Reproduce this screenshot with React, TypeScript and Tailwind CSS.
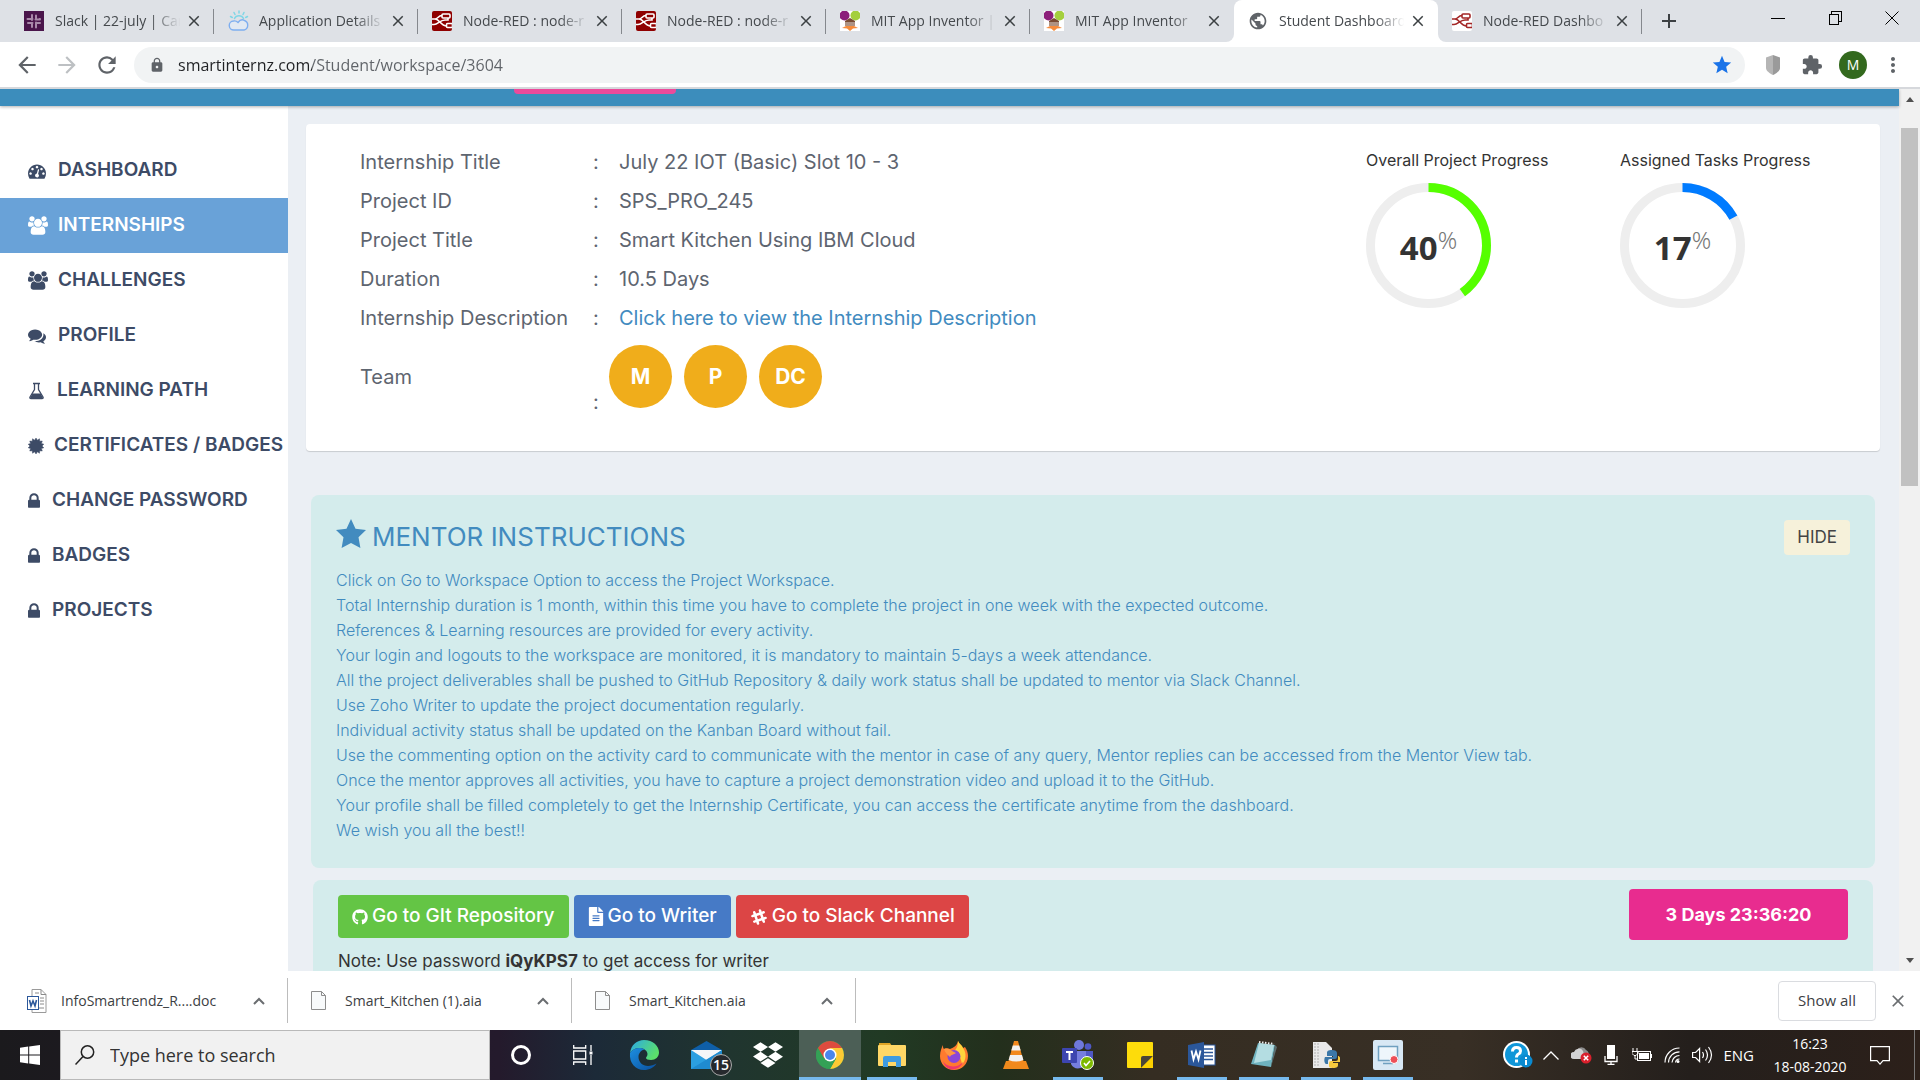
import React from "react";
import { FaGithub, FaFileAlt, FaSlackHash, FaLock, FaDropbox } from "react-icons/fa";
import { MdArrowBack, MdArrowForward, MdRefresh, MdExtension, MdStar, MdMoreVert, MdLock, MdClose, MdPublic, MdAdd } from "react-icons/md";

type IconProps = { className?: string };

/* ---------- favicons ---------- */

const SlackFavicon = () => (
  <svg viewBox="0 0 20 20" className="size-5">
    <rect width="20" height="20" fill="#4a154b" />
    <g stroke="#a98aaa" strokeWidth="2" strokeLinecap="round" fill="none">
      <path d="M8 4v5M3.500 8H5M12 4.500v4M15.500 8h.5M11.500 8.500H16M4 12h4.500M8 12v4M12 11.500v5M12 12h4M5 8h3.500" />
    </g>
  </svg>
);

const CloudFavicon = () => (
  <svg viewBox="0 0 22 22" className="h-[22px] w-[22px]" fill="none">
    <g stroke="#7fd6e6" strokeWidth="1.500" strokeLinecap="round">
      <path d="M11 1v2M6 2.500l1 2M16 2.500l-1 2M2.500 6.500l1.800 1M19.500 6.500l-1.800 1M6.500 8.500a5 5 0 0 1 9 0" />
    </g>
    <path d="M6 20a4.500 4.500 0 0 1-.5-9q2.500-.5 4.500 1.500 3-4 6.500-2a5 5 0 0 1-.5 9.500z" stroke="#7eaef0" strokeWidth="1.400" fill="#e2e9f2" />
  </svg>
);

const NodeRedMark = ({ color }: { color: string }) => (
  <g fill="none" stroke={color} strokeWidth="1.600">
    <path d="M0 8h3c3 0 3-3.500 7-3.500M3 8c5 0 5 7 12 7" />
    <rect x="10" y="3" width="8" height="4" rx="1" />
    <rect x="14.500" y="12.500" width="6" height="4" rx="1" />
    <path d="M0 13.500h2c4 0 6-4.500 11-4.500h3V7" />
  </g>
);

const NodeRedFavicon = () => (
  <svg viewBox="0 0 20 20" className="size-5">
    <rect width="20" height="20" rx="2" fill="#8f0000" />
    <NodeRedMark color="#fff" />
  </svg>
);

const NodeRedLightFavicon = () => (
  <svg viewBox="0 0 20 20" className="size-5">
    <rect width="20" height="20" rx="2" fill="#fff" />
    <NodeRedMark color="#a32626" />
  </svg>
);

const AppInventorFavicon = () => (
  <svg viewBox="0 0 20 20" className="size-5">
    <rect width="20" height="20" fill="#fff" />
    <circle cx="4.500" cy="4.500" r="5" fill="#8c1f7a" />
    <circle cx="15.500" cy="4.500" r="5" fill="#a4cf3e" />
    <path d="M5 10l5-3 5 3v5H5z" fill="#7a4b33" />
    <path d="M5 12h10M5 14h10" stroke="#fff" strokeWidth=".8" />
    <path d="M2 17l4-2h8l4 2-5 .5L10 20l-3-2.500z" fill="#f58b3c" />
  </svg>
);

/* ---------- sidebar icons ---------- */

const DashboardIcon = ({ className }: IconProps) => (
  <svg viewBox="0 0 1792 1792" fill="currentColor" className={className}>
    <path d="M384 1152q0-53-37.500-90.500t-90.500-37.500-90.500 37.500-37.500 90.500 37.500 90.500 90.500 37.500 90.500-37.500 37.500-90.500zm192-448q0-53-37.500-90.500t-90.500-37.500-90.500 37.500-37.500 90.500 37.500 90.500 90.500 37.500 90.500-37.500 37.500-90.500zm428 481l101-382q6-26-7.500-48.500t-38.500-29.500-48 6.500-30 39.500l-101 382q-60 5-107 43.500t-63 98.500q-20 77 20 146t117 89 146-20 89-117q16-60-6-117t-72-91zm660-33q0-53-37.500-90.500t-90.500-37.500-90.500 37.500-37.500 90.500 37.500 90.500 90.500 37.500 90.500-37.500 37.500-90.500zm-640-640q0-53-37.500-90.500t-90.500-37.500-90.500 37.500-37.500 90.500 37.500 90.500 90.500 37.500 90.500-37.500 37.500-90.500zm448 192q0-53-37.500-90.500t-90.500-37.500-90.500 37.500-37.500 90.500 37.500 90.500 90.500 37.500 90.500-37.500 37.500-90.500zm320 448q0 261-141 483-19 29-54 29h-1402q-35 0-54-29-141-221-141-483 0-182 71-348t191-286 286-191 348-71 348 71 286 191 191 286 71 348z" />
  </svg>
);

const GroupIcon = ({ className }: IconProps) => (
  <svg viewBox="0 0 1920 1792" fill="currentColor" className={className}>
    <path d="M593 896q-162 5-265 128h-134q-82 0-138-40.500t-56-118.500q0-353 124-353 6 0 43.500 21t97.500 42.500 119 21.500q67 0 133-23-5 37-5 66 0 139 81 256zm1071 637q0 120-73 189.500t-194 69.500h-874q-121 0-194-69.500t-73-189.500q0-53 3.500-103.500t14-109 26.500-108.500 43-97.500 62-81 85.500-53.500 111.500-20q10 0 43 21.500t73 48 107 48 135 21.500 135-21.500 107-48 73-48 43-21.500q61 0 111.500 20t85.500 53.500 62 81 43 97.500 26.500 108.500 14 109 3.500 103.500zm-1024-1277q0 106-75 181t-181 75-181-75-75-181 75-181 181-75 181 75 75 181zm704 384q0 159-112.500 271.500t-271.500 112.500-271.500-112.500-112.500-271.500 112.500-271.500 271.500-112.500 271.500 112.500 112.500 271.500zm576 225q0 78-56 118.500t-138 40.500h-134q-103-123-265-128 81-117 81-256 0-29-5-66 66 23 133 23 59 0 119-21.500t97.500-42.500 43.500-21q124 0 124 353zm-128-609q0 106-75 181t-181 75-181-75-75-181 75-181 181-75 181 75 75 181z" />
  </svg>
);

const CommentsIcon = ({ className }: IconProps) => (
  <svg viewBox="0 0 1792 1792" fill="currentColor" className={className}>
    <path d="M1408 768q0 139-94 257t-256.500 186.500-353.500 68.500q-86 0-176-16-124 88-278 128-36 9-86 16h-3q-11 0-20.500-8t-11.500-21q-1-3-1-6.500t.5-6.500 2-6l2.500-5 3.500-5.500 4-5 4.500-5 4-4.500q5-6 23-25t26-29.500 22.500-29 25-38.500 20.500-44q-124-72-195-177t-71-224q0-139 94-257t256.500-186.500 353.500-68.500 353.500 68.500 256.500 186.500 94 257zm384 256q0 120-71 224.500t-195 176.500q10 24 20.500 44t25 38.500 22.500 29 26 29.500 23 25q1 1 4 4.500t4.500 5 4 5 3.500 5.500l2.500 5 2 6 .5 6.500-1 6.500q-3 14-13 22t-22 7q-50-7-86-16-154-40-278-128-90 16-176 16-271 0-472-132 58 4 88 4 161 0 309-45t264-129q125-92 192-212t67-254q0-77-23-152 129 71 204 178t75 230z" />
  </svg>
);

const FlaskIcon = ({ className }: IconProps) => (
  <svg viewBox="0 0 17 18" fill="none" className={className}>
    <path d="M5 1.500h7M6.500 1.500v6L2 15c-.5 1 0 1.700 1 1.700h11c1 0 1.500-.7 1-1.700L10.500 7.500v-6" stroke="currentColor" strokeWidth="1.300" />
    <path d="M4.500 11.500h8l2.300 4c.3.800 0 1.200-.7 1.200H2.900c-.8 0-1-.5-.7-1.200z" fill="currentColor" />
  </svg>
);

const LockIcon = ({ className }: IconProps) => (
  <svg viewBox="320 128 1152 1408" fill="currentColor" className={className}>
    <path d="M640 768h512v-192q0-106-75-181t-181-75-181 75-75 181v192zm832 96v576q0 40-28 68t-68 28h-960q-40 0-68-28t-28-68v-576q0-40 28-68t68-28h32v-192q0-184 132-316t316-132 316 132 132 316v192h32q40 0 68 28t28 68z" />
  </svg>
);

const BADGE_POINTS = Array.from({ length: 28 }, (_, i) => {
  const r = i % 2 === 0 ? 8 : 6;
  const a = (i * Math.PI) / 14;
  return `${(8 + r * Math.sin(a)).toFixed(2)},${(8 - r * Math.cos(a)).toFixed(2)}`;
}).join(" ");

const CertificateIcon = ({ className }: IconProps) => (
  <svg viewBox="0 0 16 16" fill="currentColor" className={className}>
    <polygon points={BADGE_POINTS} strokeLinejoin="round" stroke="currentColor" strokeWidth=".5" />
  </svg>
);

/* ---------- browser chrome ---------- */

const TABS = [
  { title: "Slack | 22-july | Car", icon: <SlackFavicon /> },
  { title: "Application Details", icon: <CloudFavicon /> },
  { title: "Node-RED : node-r", icon: <NodeRedFavicon /> },
  { title: "Node-RED : node-r", icon: <NodeRedFavicon /> },
  { title: "MIT App Inventor |", icon: <AppInventorFavicon /> },
  { title: "MIT App Inventor", icon: <AppInventorFavicon /> },
  { title: "Student Dashboard", icon: <MdPublic className="size-5 text-[#5f6368]" />, active: true },
  { title: "Node-RED Dashbo", icon: <NodeRedLightFavicon /> },
];

function TabStrip() {
  return (
    <div className="flex h-[42px] items-stretch bg-[#dee1e6] pl-2.5">
      {TABS.map((tab, i) => {
        const nextActive = TABS[i + 1]?.active;
        const shape = tab.active
          ? "rounded-t-lg bg-white"
          : nextActive
            ? "rounded-br-lg bg-[#dee1e6]"
            : TABS[i - 1]?.active
              ? "rounded-bl-lg bg-[#dee1e6]"
              : "bg-[#dee1e6]";
        const under = nextActive || TABS[i - 1]?.active ? "bg-linear-to-b from-[#dee1e6] from-50% to-white to-50%" : tab.active ? "bg-[#dee1e6]" : "";
        return (
          <div key={i} className={`w-51 min-w-0 ${under}`}>
            <div className={`flex h-full items-center pl-3.5 ${shape}`}>
              <span className="flex w-[22px] shrink-0">{tab.icon}</span>
              <span className="ml-[9px] w-32 overflow-hidden whitespace-nowrap text-sm text-[#45494d] [mask-image:linear-gradient(to_right,black_75%,transparent_98%)]">
                {tab.title}
              </span>
              <button aria-label="Close tab" className="ml-0.5 text-[#3c4043]">
                <MdClose className="size-[18px]" />
              </button>
              {!tab.active && !nextActive && <span className="ml-auto h-[25px] w-px bg-[#85888d]" />}
            </div>
          </div>
        );
      })}
      <button aria-label="New tab" className="ml-[15px] text-[#3c4043]">
        <MdAdd className="size-6" />
      </button>
      <div className="ml-auto flex pb-1.5 text-black">
        <button aria-label="Minimize" className="grid w-[57px] place-items-center">
          <span className="h-px w-3.5 bg-black" />
        </button>
        <button aria-label="Restore" className="grid w-[57px] place-items-center">
          <svg viewBox="0 0 14 14" className="size-3.5" fill="none" stroke="currentColor" shapeRendering="crispEdges">
            <path d="M1 3.500h9.500v10H1zM3.500 3V.5h10v10H11" />
          </svg>
        </button>
        <button aria-label="Close window" className="grid w-[57px] place-items-center">
          <svg viewBox="0 0 14 14" className="size-3.5" fill="none" stroke="currentColor">
            <path d="M.5.5l13 13M13.500.5l-13 13" />
          </svg>
        </button>
      </div>
    </div>
  );
}

function Toolbar() {
  return (
    <div className="flex h-[47px] items-center border-b-2 border-[#d6d8dc] bg-white pr-[15px] pl-3.5 text-[#5f6368]">
      <button aria-label="Back" className="mr-3.5"><MdArrowBack className="size-[26px]" /></button>
      <button aria-label="Forward" className="mr-3.5 text-[#bdc0c3]"><MdArrowForward className="size-[26px]" /></button>
      <button aria-label="Reload" className="mr-3.5"><MdRefresh className="size-[26px]" /></button>
      <div className="flex h-9 flex-1 items-center rounded-full bg-[#f1f3f4] pr-3 pl-[15px]">
        <MdLock className="mr-[13px] size-4" />
        <input
          aria-label="Address"
          defaultValue="smartinternz.com/Student/workspace/3604"
          className="min-w-0 flex-1 bg-[linear-gradient(to_right,#202124_134px,#5f6368_134px)] bg-clip-text text-base text-transparent outline-none"
        />
        <button aria-label="Bookmark" className="text-[#1a73e8]"><MdStar className="size-[22px]" /></button>
      </div>
      <button aria-label="Shield extension" className="ml-5">
        <svg viewBox="0 0 16 20" className="h-5 w-4">
          <path d="M8 0l7 2.500V13c0 3-4 5.500-7 7z" fill="#9a9a9a" />
          <path d="M8 0L1 2.500V13c0 3 4 5.500 7 7z" fill="#b5b5b5" />
        </svg>
      </button>
      <button aria-label="Extensions" className="ml-5"><MdExtension className="size-[22px]" /></button>
      <button aria-label="Profile" className="ml-4 grid size-7 place-items-center rounded-full bg-[#33691e] text-sm text-white">M</button>
      <button aria-label="Menu" className="ml-3.5"><MdMoreVert className="size-6" /></button>
    </div>
  );
}

/* ---------- page ---------- */

const NAV = [
  { label: "DASHBOARD", icon: <DashboardIcon className="size-[18px]" />, gap: "gap-3" },
  { label: "INTERNSHIPS", icon: <GroupIcon className="h-[19px] w-5" />, gap: "gap-2.5", active: true },
  { label: "CHALLENGES", icon: <GroupIcon className="h-[19px] w-5" />, gap: "gap-2.5" },
  { label: "PROFILE", icon: <CommentsIcon className="size-[18px]" />, gap: "gap-3" },
  { label: "LEARNING PATH", icon: <FlaskIcon className="h-[18px] w-[17px]" />, gap: "gap-3" },
  { label: "CERTIFICATES / BADGES", icon: <CertificateIcon className="size-4" />, gap: "gap-2.5" },
  { label: "CHANGE PASSWORD", icon: <LockIcon className="h-[15px] w-3" />, gap: "gap-3" },
  { label: "BADGES", icon: <LockIcon className="h-[15px] w-3" />, gap: "gap-3" },
  { label: "PROJECTS", icon: <LockIcon className="h-[15px] w-3" />, gap: "gap-3" },
];

function Sidebar() {
  return (
    <nav className="w-72 shrink-0 bg-white pt-[37px]">
      {NAV.map((n) => (
        <a
          key={n.label}
          href="#"
          className={`flex h-[55px] items-center pl-7 text-[19px] font-semibold whitespace-nowrap ${n.gap} ${n.active ? "bg-[#69a2d8] text-white" : "text-[#3d4b66]"}`}
        >
          {n.icon}
          {n.label}
        </a>
      ))}
    </nav>
  );
}

const DETAILS: [string, React.ReactNode][] = [
  ["Internship Title", "July 22 IOT (Basic) Slot 10 - 3"],
  ["Project ID", "SPS_PRO_245"],
  ["Project Title", "Smart Kitchen Using IBM Cloud"],
  ["Duration", "10.5 Days"],
  ["Internship Description", <a key="d" href="#" className="text-[#428bbf]">Click here to view the Internship Description</a>],
];

function Ring({ label, value, color }: { label: string; value: number; color: string }) {
  const r = 58;
  const c = 2 * Math.PI * r;
  return (
    <div className="w-[254px]">
      <div className="text-base leading-6 whitespace-nowrap text-[#333]">{label}</div>
      <div className="relative mt-[11px] size-[125px]">
        <svg viewBox="0 0 125 125" className="size-full -rotate-90" fill="none" strokeWidth="9">
          <circle cx="62.500" cy="62.500" r={r} stroke="#eee" />
          <circle cx="62.500" cy="62.500" r={r} stroke={color} strokeDasharray={`${(c * value) / 100} ${c}`} />
        </svg>
        <div className="absolute inset-0 flex items-center justify-center pt-1 font-['Noto_Sans',sans-serif] text-[33px] font-bold text-[#333]">
          {value}
          <span className="mb-4 text-2xl font-light text-[#777]">%</span>
        </div>
      </div>
    </div>
  );
}

function DetailsCard() {
  return (
    <section className="flex justify-between rounded bg-white pt-[18px] pb-[35px] pl-[54px] shadow-[0_1px_1px_rgba(0,0,0,0.15)]">
      <table className="self-start text-left text-xl text-[#5e6570]">
        <tbody>
          {DETAILS.map(([k, v]) => (
            <tr key={k} className="h-[39px]">
              <th className="w-[233px] p-0 font-normal">{k}</th>
              <td className="w-[26px] p-0">:</td>
              <td className="p-0">{v}</td>
            </tr>
          ))}
          <tr className="h-[79px]">
            <th className="p-0 font-normal">Team</th>
            <td className="p-0 align-bottom">:</td>
            <td className="p-0">
              <div className="-ml-2.5 flex gap-3">
                {["M", "P", "DC"].map((t) => (
                  <span key={t} className="grid size-[63px] place-items-center rounded-full bg-[#f0ad1b] text-[21px] font-bold text-white">{t}</span>
                ))}
              </div>
            </td>
          </tr>
        </tbody>
      </table>
      <div className="flex pt-1.5 pr-1.5">
        <Ring label="Overall Project Progress" value={40} color="#55ff00" />
        <Ring label="Assigned Tasks Progress" value={17} color="#007bff" />
      </div>
    </section>
  );
}

const INSTRUCTIONS = [
  "Click on Go to Workspace Option to access the Project Workspace.",
  "Total Internship duration is 1 month, within this time you have to complete the project in one week with the expected outcome.",
  "References & Learning resources are provided for every activity.",
  "Your login and logouts to the workspace are monitored, it is mandatory to maintain 5-days a week attendance.",
  "All the project deliverables shall be pushed to GitHub Repository & daily work status shall be updated to mentor via Slack Channel.",
  "Use Zoho Writer to update the project documentation regularly.",
  "Individual activity status shall be updated on the Kanban Board without fail.",
  "Use the commenting option on the activity card to communicate with the mentor in case of any query, Mentor replies can be accessed from the Mentor View tab.",
  "Once the mentor approves all activities, you have to capture a project demonstration video and upload it to the GitHub.",
  "Your profile shall be filled completely to get the Internship Certificate, you can access the certificate anytime from the dashboard.",
  "We wish you all the best!!",
];

function Instructions() {
  return (
    <section className="mx-[5px] mt-11 rounded-lg bg-[#d4ecec] px-[25px] pt-[25px] pb-[25px] text-[#428bbf]">
      <div className="flex items-start justify-between">
        <h2 className="flex h-8 items-center gap-1.5 text-[26px]">
          <svg viewBox="0 0 30 29" className="mb-1.5 h-[29px] w-[30px]" fill="currentColor">
            <path d="M15 0l4.500 9.800L30 11l-7.500 7.300L24.400 29 15 24 5.600 29l1.900-10.700L0 11l10.500-1.200z" />
          </svg>
          MENTOR INSTRUCTIONS
        </h2>
        <button className="h-[35px] rounded bg-[#f6f1da] px-[13px] text-[17px] text-[#444]">HIDE</button>
      </div>
      <div className="mt-[13px] text-base leading-[25px] font-light whitespace-nowrap">
        {INSTRUCTIONS.map((t) => <p key={t}>{t}</p>)}
      </div>
    </section>
  );
}

function Actions() {
  return (
    <section className="mx-[7px] mt-3 flex h-[200px] items-start justify-between rounded-t-lg bg-[#d4ecec] px-[25px] text-white">
      <div className="pt-[15px]">
        <div className="flex gap-[5px] text-[19px] font-medium">
          <a href="#" className="flex h-[43px] items-center gap-1 rounded bg-[#64c545] px-3.5"><FaGithub className="size-4" />Go to GIt Repository</a>
          <a href="#" className="flex h-[43px] items-center gap-1 rounded bg-[#467ac6] px-3.5"><FaFileAlt className="h-[19px] w-4" />Go to Writer</a>
          <a href="#" className="flex h-[43px] items-center gap-1 rounded bg-[#dc4545] px-3.5"><FaSlackHash className="size-[18px]" />Go to Slack Channel</a>
        </div>
        <p className="mt-[11px] text-[17px] text-[#333]">
          Note: Use password <b>iQyKPS7</b> to get access for writer
        </p>
      </div>
      <div className="mt-[9px] grid h-[51px] w-[219px] place-items-center rounded bg-[#e82c8f] text-lg font-bold">3 Days 23:36:20</div>
    </section>
  );
}

function Scrollbar() {
  return (
    <div className="flex w-[21px] shrink-0 flex-col items-center bg-[#f1f1f1] py-2">
      <svg viewBox="0 0 8 5" className="h-[5px] w-2.5" fill="#505050"><path d="M4 0l4 5H0z" /></svg>
      <div className="mt-[26px] h-[358px] w-[17px] bg-[#c1c1c1]" />
      <svg viewBox="0 0 8 5" className="mt-auto h-[5px] w-2.5" fill="#505050"><path d="M0 0h8L4 5z" /></svg>
    </div>
  );
}

function Page() {
  return (
    <div className="flex min-h-0 flex-1 overflow-hidden bg-[#ebeff4] font-[Inter,sans-serif]">
      <div className="flex min-w-0 flex-1 flex-col">
        <header className="z-10 h-[17px] shrink-0 bg-[#3c8dbc] pl-[514px] shadow-[0_1px_3px_rgba(0,0,0,0.3)]">
          <div className="h-[5px] w-[162px] rounded-b bg-[#ec4a9b]" />
        </header>
        <div className="flex min-h-0 flex-1">
          <Sidebar />
          <main className="min-w-0 flex-1 overflow-hidden pt-[18px] pr-[19px] pl-[18px]">
            <DetailsCard />
            <Instructions />
            <Actions />
          </main>
        </div>
      </div>
      <Scrollbar />
    </div>
  );
}

/* ---------- downloads ---------- */

const WordDoc = () => (
  <svg viewBox="0 0 20 24" className="h-6 w-5">
    <path d="M5 .5h9l5 5v18H5z" fill="#fff" stroke="#9a9a9a" />
    <path d="M14 .5v5h5M13 9h4M13 12h4M13 15h4M8 19h9M8 4h4" stroke="#8a8a8a" fill="none" />
    <rect x=".5" y="7.500" width="11" height="13" fill="#fff" stroke="#2b579a" />
    <path d="M2.500 11l1.500 6 2-5 2 5 1.500-6" stroke="#2b579a" strokeWidth="1.600" fill="none" />
  </svg>
);

const BlankDoc = () => (
  <svg viewBox="0 0 15 19" className="h-[19px] w-[15px]">
    <path d="M.5.5h10l4 4v14H.5z" fill="#f8fafb" stroke="#8d8d8d" />
    <path d="M10.500.5v4h4" fill="none" stroke="#8d8d8d" />
  </svg>
);

function Downloads() {
  const items = [
    { name: "InfoSmartrendz_R....doc", icon: <WordDoc /> },
    { name: "Smart_Kitchen (1).aia", icon: <BlankDoc /> },
    { name: "Smart_Kitchen.aia", icon: <BlankDoc /> },
  ];
  return (
    <div className="flex h-[59px] shrink-0 items-center bg-white pl-1 text-sm text-[#3c4043]">
      {items.map((d) => (
        <div key={d.name} className="flex h-[45px] w-71 items-center border-r border-[#bcbcbc] pr-[22px] pl-[21px]">
          <span className="flex w-9 shrink-0 items-center pl-0.5">{d.icon}</span>
          <a href="#" className="min-w-0 flex-1 whitespace-nowrap">{d.name}</a>
          <button aria-label={`Options for ${d.name}`}>
            <svg viewBox="0 0 12 8" className="h-2 w-3" fill="none" stroke="#6a6d70" strokeWidth="2"><path d="M1 7l5-5 5 5" /></svg>
          </button>
        </div>
      ))}
      <button className="mr-3 ml-auto h-10 w-[98px] rounded border border-[#dadce0] text-[15px]">Show all</button>
      <button aria-label="Close downloads" className="mr-3 text-[#6a6d70]"><MdClose className="size-5" /></button>
    </div>
  );
}

/* ---------- taskbar ---------- */

const EdgeIcon = () => (
  <svg viewBox="0 0 30 30" className="size-[30px]">
    <defs>
      <linearGradient id="edgeTop" x1="0" y1="0" x2="1" y2="0.500"><stop offset="0" stopColor="#2aa8e8" /><stop offset="1" stopColor="#5be06a" /></linearGradient>
      <linearGradient id="edgeLow" x1="0" y1="0" x2="1" y2="1"><stop offset="0" stopColor="#1d8fe0" /><stop offset="1" stopColor="#0a4f9e" /></linearGradient>
    </defs>
    <path d="M1 13C2 5 8 0 15 0c9 0 15 6 15 12.500C30 17 26.500 20 22 20c-3 0-5-1-5-2 0-1 1.500-1.500 1.500-4 0-3-3.500-6-8-6C6 8 3 10 1 13z" fill="url(#edgeTop)" />
    <path d="M1 13c2-3 5-5 9.500-5 2 0 4 .6 5.500 1.600C12 10 9.500 13.500 9.500 17c0 5 4 9 9.500 9 3 0 6-1 8.500-2.500C25 27.500 20.500 30 15 30 6.500 30 0 23 1 13z" fill="url(#edgeLow)" />
  </svg>
);

const MailIcon = () => (
  <svg viewBox="0 0 31 28" className="h-7 w-[31px]">
    <path d="M15.500 0L31 9v19H0V9z" fill="#0f5fa8" />
    <path d="M0 9h31v14H0z" fill="#f4f6f8" />
    <path d="M0 9l15.500 10L31 9v19H0z" fill="#2b9fe0" />
    <path d="M0 28l31-19v19z" fill="#1f8bd0" />
  </svg>
);

const ChromeIcon = () => (
  <svg viewBox="0 0 28 28" className="size-7">
    <circle cx="14" cy="14" r="14" fill="#34a156" />
    <path d="M14 14L1.900 7A14 14 0 0 1 26.100 7z" fill="#dd4b3e" />
    <path d="M14 7h12.100A14 14 0 0 1 14 28l6-10.500z" fill="#fcc934" />
    <path d="M1.900 7L8 17.500 14 14 14 7z" fill="#dd4b3e" />
    <path d="M1.900 7A14 14 0 0 0 14 28l6-10.500-6 3-6-3z" fill="#34a156" />
    <circle cx="14" cy="14" r="6.500" fill="#fff" />
    <circle cx="14" cy="14" r="5" fill="#4a86ec" />
  </svg>
);

const ExplorerIcon = () => (
  <svg viewBox="0 0 28 24" className="h-6 w-7">
    <path d="M1 0h11l2 3H1z" fill="#e0a526" />
    <rect y="2" width="28" height="21" rx="1" fill="#ffd766" />
    <path d="M5 24v-9q0-2 2-2h14q2 0 2 2v9h-5v-5h-8v5z" fill="#3f9be0" />
  </svg>
);

const FirefoxIcon = () => (
  <svg viewBox="0 0 28 29" className="h-[29px] w-7">
    <path d="M18 0c1 3 4 4 5 7l2-1c2 3 3 6 3 9 0 8-6 14-14 14S0 23 0 15C0 10 2 6 3 4c0 2 0 3 1 4 2-1 4-1 6 0 3-1 7-3 8-8z" fill="#ff7a2f" />
    <path d="M18 0c1 3 4 4 5 7 4 5 3 13-1 16-1-6-3-9-8-13 3-2 4-6 4-10z" fill="#ffd43d" />
    <path d="M3 20c3 6 14 8 20 1-3 9-17 11-20-1z" fill="#f0386b" />
    <circle cx="14" cy="15.500" r="6.500" fill="#8a46d8" />
    <path d="M4 8c3-1 6 0 8 2l4 2c-2 2-5 1-6 4-2-2-5-4-6-8z" fill="#ff9640" />
  </svg>
);

const VlcIcon = () => (
  <svg viewBox="0 0 26 28" className="h-7 w-[26px]">
    <path d="M3 20h20l3 8H0z" fill="#f08a1c" />
    <path d="M11 0h4l6 22q-8 4-16 0z" fill="#f2891d" />
    <path d="M9.800 4.500h6.400l1.500 5H8.300zM7 14h12l1.400 5q-7.400 3-14.800 0z" fill="#f1f1f1" />
  </svg>
);

const TeamsIcon = () => (
  <svg viewBox="0 0 32 30" className="h-[30px] w-8">
    <circle cx="17" cy="5" r="5" fill="#6f78db" />
    <circle cx="26" cy="6.500" r="3.300" fill="#4f58c4" />
    <path d="M20 11h11v9a6 6 0 0 1-9 4z" fill="#4f58c4" />
    <path d="M9 11h15v11a8 8 0 0 1-15 2z" fill="#767edf" />
    <rect y="8" width="15" height="15" rx="1" fill="#3d45b0" />
    <path d="M4 12h7M7.500 12v8" stroke="#fff" strokeWidth="2" />
    <circle cx="25" cy="23" r="6.500" fill="#7db900" stroke="#fff" />
    <path d="M22 23l2 2.500 4-4.500" fill="none" stroke="#fff" strokeWidth="1.600" />
  </svg>
);

const StickyIcon = () => (
  <svg viewBox="0 0 26 26" className="size-[26px]">
    <path d="M1 0h24q1 0 1 1v13L14 26H1q-1 0-1-1V1q0-1 1-1z" fill="#fddc0b" />
    <path d="M14 26V16q0-2 2-2h10z" fill="#4a4637" />
    <path d="M14 26l12-12v12z" fill="#fcd000" />
  </svg>
);

const WordIcon = () => (
  <svg viewBox="0 0 28 26" className="h-[26px] w-7">
    <rect x="12" y="3" width="15" height="20" fill="#fff" stroke="#2b579a" />
    <path d="M16 7h9M16 10.500h9M16 14h9M16 17.500h9" stroke="#2b579a" strokeWidth="1.500" />
    <path d="M0 3l16-3v26L0 23z" fill="#2b579a" />
    <path d="M3.500 8.500l2 9 2.500-8 2.500 8 2-9" fill="none" stroke="#fff" strokeWidth="1.800" />
  </svg>
);

const NotepadIcon = () => (
  <svg viewBox="0 0 28 28" className="size-7">
    <path d="M8 2l17 2-4 22-20-3z" fill="#6fb3bf" />
    <path d="M9 2l15 2-3 15L4 22z" fill="#b4dde2" />
    <path d="M21 26l6-20-2-2-4 22z" fill="#5b6d70" />
    <path d="M9 1l15 2" stroke="#eee" strokeWidth="2" strokeDasharray="1.500 1.500" />
  </svg>
);

const PythonIcon = () => (
  <svg viewBox="0 0 28 28" className="size-7">
    <path d="M1 1h13l6 6v20H1z" fill="#e9e9e9" />
    <path d="M3 2v24M6 2v24" stroke="#b0b0b0" strokeDasharray="2 1" />
    <path d="M20 9c-4 0-5 1-5 3v3h6v1h-8c-1 2-1 6 1 7h2v-3q0-2 2-2h5q2 0 2-2v-4c0-2-2-3-5-3z" fill="#3b77a8" />
    <path d="M21 27c4 0 5-1 5-3v-2h-5v-1h7c1-3 0-6-2-6v3q0 2-2 2h-5q-2 0-2 2v3c0 1 1 2 4 2z" fill="#f7c93d" />
  </svg>
);

const CaptureIcon = () => (
  <svg viewBox="0 0 30 30" className="size-[30px]">
    <rect width="30" height="30" rx="2" fill="#d8e8f4" />
    <rect x="5.500" y="6.500" width="19" height="14" fill="#eef6fb" stroke="#6fa0c0" strokeWidth="1.500" />
    <path d="M10 23.500h10" stroke="#6fa0c0" strokeWidth="1.500" />
    <circle cx="21" cy="19.500" r="4" fill="#ee4f57" stroke="#fff" />
  </svg>
);

const APPS = [
  { name: "Edge", icon: <EdgeIcon /> },
  { name: "Mail", icon: <MailIcon />, badge: "15" },
  { name: "Dropbox", icon: <FaDropbox className="size-[30px] text-white" /> },
  { name: "Chrome", icon: <ChromeIcon />, active: true },
  { name: "File Explorer", icon: <ExplorerIcon />, open: true },
  { name: "Firefox", icon: <FirefoxIcon /> },
  { name: "VLC", icon: <VlcIcon /> },
  { name: "Teams", icon: <TeamsIcon />, open: true },
  { name: "Sticky Notes", icon: <StickyIcon /> },
  { name: "Word", icon: <WordIcon />, open: true },
  { name: "Notepad", icon: <NotepadIcon />, open: true },
  { name: "Python", icon: <PythonIcon />, open: true },
  { name: "Screen Recorder", icon: <CaptureIcon />, open: true },
];

function Tray() {
  return (
    <div className="ml-auto flex items-center text-white">
      <svg viewBox="0 0 30 28" className="h-7 w-[30px]">
        <circle cx="13.500" cy="13.500" r="13.500" fill="#fff" />
        <circle cx="13.500" cy="13.500" r="11.500" fill="#0f96d8" />
        <path d="M9.500 10.500q0-4 4-4t4 3.500q0 2-2 3t-2 3.500M13.500 18.500v3" fill="none" stroke="#fff" strokeWidth="3" />
        <circle cx="23" cy="20" r="6.500" fill="#0a8ad0" />
        <path d="M23 16v2M23 19v5" stroke="#fff" strokeWidth="2" />
      </svg>
      <svg viewBox="0 0 16 9" className="ml-2.5 h-[9px] w-4" fill="none" stroke="currentColor" strokeWidth="1.300"><path d="M.5 8.500L8 1l7.500 7.500" /></svg>
      <svg viewBox="0 0 21 18" className="ml-3 h-[18px] w-[21px]">
        <path d="M6 4a5 5 0 0 1 9 0 4 4 0 0 1 2 6l-8 2z" fill="#8d8d8d" />
        <path d="M3 13a3.500 3.500 0 0 1 0-7 5 5 0 0 1 9-1l2 8z" fill="#d2d2d2" />
        <circle cx="15" cy="12" r="5.500" fill="#d9202c" />
        <path d="M12.800 9.800l4.400 4.400M17.200 9.800l-4.400 4.400" stroke="#fff" strokeWidth="1.500" />
      </svg>
      <svg viewBox="0 0 14 20" className="ml-3 h-5 w-3.5" fill="none" stroke="currentColor" strokeWidth="1.300">
        <rect x="3" width="8" height="14" fill="currentColor" stroke="none" />
        <path d="M1 11v5.500h12V11M7 16.500V19M3.500 19.300h7" />
      </svg>
      <svg viewBox="0 0 20 14" className="ml-3.5 h-3.5 w-5" fill="none" stroke="currentColor">
        <rect x="5.500" y="3.500" width="13" height="9" />
        <rect x="7" y="5" width="10" height="6" fill="currentColor" stroke="none" />
        <path d="M19.500 6v4M1 0v3M5 0v3M0 3.500h6v2l-2 2H2l-2-2zM3 7.500V11h2" />
      </svg>
      <svg viewBox="0 0 16 16" className="ml-3 size-4" fill="none" stroke="currentColor" strokeWidth="1.200">
        <path d="M1 15.500A14.500 14.500 0 0 1 15.500 1M4.500 15.500A11 11 0 0 1 15.500 4.800M8 15.500a7.500 7.500 0 0 1 7.500-7M11.500 15.500a4 4 0 0 1 4-3.500" />
        <circle cx="14" cy="14.500" r="1.500" fill="currentColor" stroke="none" />
      </svg>
      <svg viewBox="0 0 21 18" className="ml-3 h-[18px] w-[21px]" fill="none" stroke="currentColor" strokeWidth="1.200">
        <path d="M.6 6.500h3l4-4v13l-4-4h-3zM10.500 6q2 3 0 6M13.500 3.500q4 5.500 0 11M16.500 1q6 8 0 16" />
      </svg>
      <span className="ml-2.5 text-[15px]">ENG</span>
      <div className="ml-4 w-20 text-center text-sm leading-[23px] whitespace-nowrap">
        <div>16:23</div>
        <div>18-08-2020</div>
      </div>
      <svg viewBox="0 0 20 19" className="ml-5 h-[19px] w-5" fill="none" stroke="currentColor" strokeWidth="1.200">
        <path d="M.6.6h18.800v14H13l-3 3.500-3-3.500H.6z" />
      </svg>
      <span className="mr-[5px] ml-6 h-[50px] w-px bg-[#777]" />
    </div>
  );
}

function Taskbar() {
  return (
    <footer className="flex h-[50px] shrink-0 bg-[linear-gradient(to_right,#1b1a1d_0%,#241a2c_26%,#1c2a38_31%,#20352f_38%,#213a24_46%,#232f1c_52%,#352d22_60%,#382f25_76%,#241f1c_88%,#2c201a_100%)]">
      <button aria-label="Start" className="grid w-15 place-items-center">
        <svg viewBox="0 0 20 20" className="size-5" fill="#fff">
          <path d="M0 2.800l8.200-1.200v8H0zM9.200 1.500L20 0v9.600H9.200zM0 10.500h8.200v8L0 17.200zM9.200 10.500H20V20L9.200 18.500z" />
        </svg>
      </button>
      <label className="flex w-[430px] items-center border border-[#b9b9b9] bg-[#f1f1f1] pl-3.5">
        <svg viewBox="0 0 20 20" className="mr-[15px] size-5" fill="none" stroke="#222" strokeWidth="1.500"><circle cx="12.500" cy="7" r="6.200" /><path d="M8 11.500L.5 19.500" /></svg>
        <input aria-label="Type here to search" placeholder="Type here to search" className="min-w-0 flex-1 text-lg outline-none placeholder:text-[#333]" />
      </label>
      <button aria-label="Cortana" className="grid w-[62px] place-items-center"><span className="size-5 rounded-full border-3 border-white" /></button>
      <button aria-label="Task view" className="grid w-[61px] place-items-center">
        <svg viewBox="0 0 20 20" className="size-5" fill="none" stroke="#fff" strokeWidth="1.300"><path d="M.7 0v3h12V0M.7 20v-3h12v3M.7 6h12v8H.7zM18 0v6M18 10v10" /><path d="M16.500 6.500h3v3h-3z" fill="#fff" stroke="none" /></svg>
      </button>
      {APPS.map((a) => (
        <button key={a.name} aria-label={a.name} className={`relative grid w-[62px] place-items-center ${a.active ? "bg-[#4c5f56]" : ""}`}>
          {a.icon}
          {a.badge && (
            <span className="absolute top-6 left-[35px] grid size-[22px] place-items-center rounded-full border border-[#aaa] bg-[#26292d] text-sm font-semibold text-white">{a.badge}</span>
          )}
          {a.active && <span className="absolute inset-x-0 bottom-0 h-[3px] bg-[#76b9ed]" />}
          {a.open && <span className="absolute inset-x-1.5 bottom-0 h-[3px] bg-[#76b9ed]" />}
        </button>
      ))}
      <Tray />
    </footer>
  );
}

export default function App() {
  return (
    <div className="flex h-screen flex-col overflow-hidden font-['Open_Sans',sans-serif]">
      <TabStrip />
      <Toolbar />
      <Page />
      <Downloads />
      <Taskbar />
    </div>
  );
}
